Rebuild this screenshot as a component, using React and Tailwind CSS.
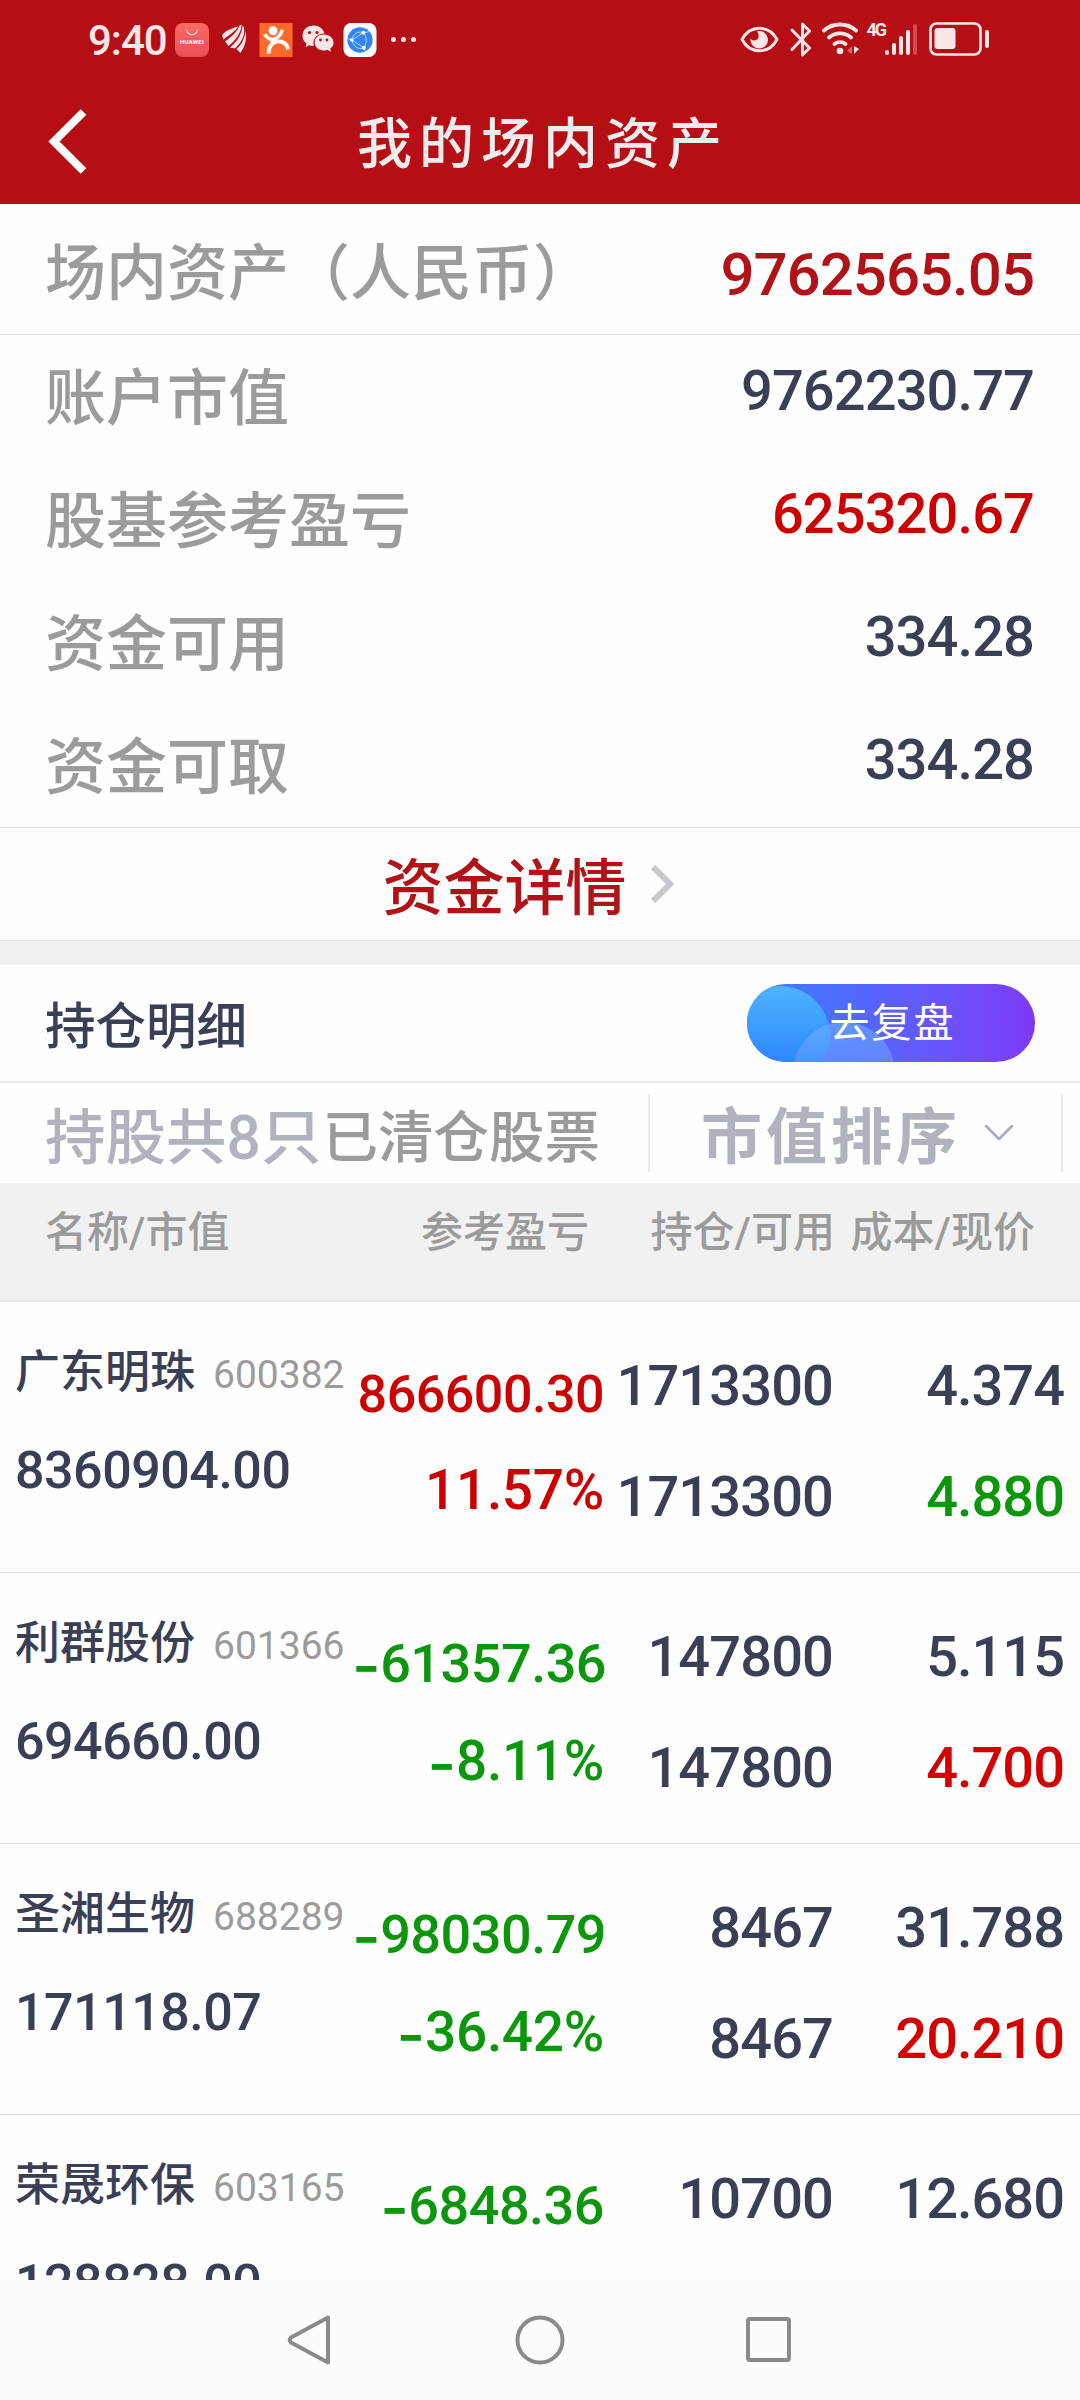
import React from 'react';

const summary = [
  { label: '账户市值', value: '9762230.77', color: 'text-[#3a3f56]' },
  { label: '股基参考盈亏', value: '625320.67', color: 'text-[#cc0000]' },
  { label: '资金可用', value: '334.28', color: 'text-[#3a3f56]' },
  { label: '资金可取', value: '334.28', color: 'text-[#3a3f56]' },
];

const holdings = [
  { name: '广东明珠', code: '600382', marketValue: '8360904.00', profit: '866600.30', rate: '11.57%', amount: '1713300', usable: '1713300', cost: '4.374', price: '4.880', priceUp: false },
  { name: '利群股份', code: '601366', marketValue: '694660.00', profit: '-61357.36', rate: '-8.11%', amount: '147800', usable: '147800', cost: '5.115', price: '4.700', priceUp: true },
  { name: '圣湘生物', code: '688289', marketValue: '171118.07', profit: '-98030.79', rate: '-36.42%', amount: '8467', usable: '8467', cost: '31.788', price: '20.210', priceUp: true },
  { name: '荣晟环保', code: '603165', marketValue: '128828.00', profit: '-6848.36', amount: '10700', cost: '12.680' },
];

const StatusBar = () => (
  <div className="flex h-[80px] items-center justify-between pl-[88px] pr-[90px]">
    <div className="flex items-center text-[#fbe6e7]">
      <span className="w-[87px] text-[42px] font-medium leading-[50px] tracking-[-1px] pt-[2px]">9:40</span>
      {/* huawei store */}
      <div className="mb-[1px] flex h-[34px] w-[34px] flex-col items-center rounded-[8px] bg-gradient-to-b from-[#fb6a5f] to-[#e84f58]">
        <svg className="mt-[6px] h-[7px] w-[12px]" viewBox="0 0 12 7" fill="none" stroke="#ffd5d0" strokeWidth="1.3">
          <path d="M0.8 0.5a5.2 5.2 0 0 0 10.4 0" />
        </svg>
        <span className="mt-[2px] text-[6px] font-bold leading-[8px] tracking-[0.3px] text-white">HUAWEI</span>
      </div>
      {/* feather */}
      <svg className="mb-[2px] ml-[13px] h-[30px] w-[25px]" viewBox="0 0 25 30" fill="currentColor">
        <path d="M0 11C5 5.500 11 4 16 2.500C13 8 8 10 1.500 15.500Z" />
        <path d="M3 17.500C10 12.500 15 8 17.500 1.500L19.500 0.500C19.500 9 13 17 6.500 22Z" />
        <path d="M8 23.500C15 18 19.500 11 20.800 1L22 4C23.500 13 18 19.500 13 24.500Z" />
        <path d="M14.500 25C19 21 22.500 16 23.500 7C25.500 16 22 24 18.500 29Z" />
      </svg>
      {/* dancing man */}
      <svg className="mb-[1px] ml-[12px] h-[34px] w-[34px]" viewBox="0 0 34 35" fill="none">
        <rect width="34" height="35" fill="#ff6a2b" />
        <circle cx="14" cy="8" r="4.6" fill="#fff" />
        <path d="M5.500 11.500C8 16 11 17.500 15 16.500C20 15.500 22 12 23.500 7" stroke="#fff" strokeWidth="3.600" />
        <path d="M14 16L13 22M9.500 31.500C9 25 13 19.500 18 19C24 18.500 28 21 29.500 27" stroke="#fff" strokeWidth="4" />
      </svg>
      {/* wechat */}
      <svg className="mb-[2px] ml-[9px] h-[28px] w-[32px]" viewBox="0 0 32 28" fill="currentColor">
        <path d="M11.500 0.500C5 0.500 0.500 5 0.500 10.500C0.500 14 2 16.500 4.500 18.500L3.500 22L7.500 20.200C9 20.800 10.500 21 11.800 20.800C10 14 15 8.500 22.500 8.500C21.500 4 17 0.500 11.500 0.500Z" />
        <path d="M21.800 9.500C16.500 9.500 12.700 13 12.700 17.500C12.700 22 16.500 25.500 21.800 25.500C23 25.500 24.500 25.300 25.500 24.800L29 26.800L28.200 23.600C30.500 22 31.500 20 31.500 17.500C31.500 13 27 9.500 21.800 9.500Z" />
        <g fill="#b50f15">
          <circle cx="7.500" cy="7.500" r="1.600" />
          <circle cx="15" cy="7.500" r="1.600" />
          <circle cx="18.500" cy="15" r="1.400" />
          <circle cx="25" cy="15" r="1.400" />
        </g>
      </svg>
      {/* browser */}
      <svg className="mb-[1px] ml-[9px] h-[34px] w-[34px]" viewBox="0 0 34 35" fill="none">
        <rect width="34" height="35" rx="8" fill="#fff" />
        <circle cx="17" cy="17.500" r="13" fill="#3186f3" />
        <path d="M20.500 10L8.500 17.500L21 25.500M20.500 10C15 8 10 11 8.500 17.500M21.500 10C24 15 24 21 21 25.500M8.500 17.500C10 24 15 28 21 25.500M20.500 10L26 9M21 25.500L22 29M8.500 17.500L4.500 16" stroke="#b9d8ff" />
        <g fill="#fff">
          <circle cx="20.500" cy="10" r="2" />
          <circle cx="8.500" cy="17.500" r="1.800" />
          <circle cx="21" cy="25.500" r="2" />
        </g>
      </svg>
      <div className="mb-[2px] ml-[14px] flex gap-[5px]">
        <span className="size-[5px] rounded-full bg-current" />
        <span className="size-[5px] rounded-full bg-current" />
        <span className="size-[5px] rounded-full bg-current" />
      </div>
    </div>

    <div className="mb-[2px] flex items-center text-[#fbe6e7]">
      <svg className="h-[27px] w-[39px]" viewBox="0 0 39 27" fill="none">
        <path d="M2 13.500C10 -1.500 29 -1.500 37 13.500C29 28.500 10 28.500 2 13.500Z" stroke="currentColor" strokeWidth="3" strokeLinejoin="round" />
        <path d="M17 5.200A8.800 8.800 0 1 1 10.500 12.500C12 15.500 18 15 18.600 11C18.900 8.500 18 6.500 17 5.200Z" fill="currentColor" />
      </svg>
      <svg className="ml-[11px] h-[35px] w-[22px]" viewBox="0 0 22 35" fill="none" stroke="currentColor" strokeWidth="3" strokeLinecap="round" strokeLinejoin="round">
        <path d="M2 8L19.500 26L12.500 33V2L19.500 9L2 27.500" />
      </svg>
      <svg className="ml-[10px] h-[34px] w-[38px]" viewBox="0 0 38 34" fill="none">
        <g stroke="currentColor" strokeWidth="3.800" strokeLinecap="round">
          <path d="M2 8.500C11 0.500 25 0.500 34 8.500" />
          <path d="M7 15.500C13 10 23 10 29 15.500" />
          <path d="M12.500 22C16 19.500 20.500 19.500 23.500 22" />
        </g>
        <circle cx="18" cy="29" r="3.300" fill="currentColor" />
        <path d="M30 24V32L25 29Z" fill="#d8666b" />
        <path d="M32 24V32L37 27Z" fill="currentColor" />
      </svg>
      <span className="ml-[6px] self-start text-[18px] font-bold leading-[16px] tracking-[-2px]">4G</span>
      <svg className="h-[33px] w-[33px]" viewBox="0 0 33 33" fill="currentColor">
        <rect x="0" y="27" width="4" height="5" rx="2" />
        <rect x="7" y="20" width="4" height="12" rx="2" />
        <rect x="14" y="13" width="4" height="19" rx="2" />
        <rect x="21" y="7" width="4" height="25" rx="2" />
        <rect x="28" y="1" width="4" height="31" rx="2" fill="#d04a50" />
      </svg>
      <svg className="ml-[11px] h-[34px] w-[61px]" viewBox="0 0 61 34" fill="none">
        <rect x="1.500" y="1.500" width="50" height="31" rx="6" stroke="currentColor" strokeWidth="2.600" />
        <rect x="5.500" y="6" width="21" height="21" rx="3" fill="currentColor" />
        <rect x="56" y="8" width="4" height="18" rx="2" fill="currentColor" />
      </svg>
    </div>
  </div>
);

// hyphen is set larger in Inter so it gets the width of a minus sign
const Signed = ({ text }) =>
  text.startsWith('-') ? (
    <>
      <span className="align-[-6px] font-['Inter',sans-serif] text-[62px] leading-[20px]">-</span>
      {text.slice(1)}
    </>
  ) : (
    text
  );

const Holding = ({ item }) => {
  const isLoss = item.profit.startsWith('-');
  const priceColor = item.priceUp ? 'text-[#d40000]' : 'text-[#0b960b]';

  return (
    <div className="grid h-[271px] shrink-0 grid-cols-[337px_252px_229px_231px] border-b border-[#e0e0e0] px-[15px] text-[#3a3f56]">
      <div className="pt-[41px]">
        <div className="flex h-[60px] items-baseline whitespace-nowrap leading-[60px]">
          <span className="text-[45px]">{item.name}</span>
          <span className="ml-[18px] text-[39px] font-[450] text-[#9b9b9b]">{item.code}</span>
        </div>
        <div className="mt-[38px] text-[52px] leading-[60px] tracking-[-0.5px]">{item.marketValue}</div>
      </div>
      <div className={`text-right whitespace-nowrap ${isLoss ? 'pt-[61px] text-[#0b960b]' : 'pt-[63px] text-[#cc0000]'}`}>
        <div className={`leading-[60px] tracking-[-0.5px] ${isLoss ? 'text-[54px]' : 'text-[52px]'}`}>
          <Signed text={item.profit} />
        </div>
        {item.rate && (
          <div className={`text-[55px] leading-[60px] tracking-[-0.3px] ${isLoss ? 'mt-[37px]' : 'mt-[35px]'}`}>
            <Signed text={item.rate} />
          </div>
        )}
      </div>
      <div className="pt-[54px] text-right text-[56px] leading-[60px] tracking-[-0.9px]">
        <div>{item.amount}</div>
        {item.usable && <div className="mt-[51px]">{item.usable}</div>}
      </div>
      <div className="pt-[54px] text-right text-[56px] leading-[60px] tracking-[-1px]">
        <div>{item.cost}</div>
        {item.price && <div className={`mt-[51px] ${priceColor}`}>{item.price}</div>}
      </div>
    </div>
  );
};

const App = () => {
  return (
    <div className="flex h-[2400px] w-[1080px] flex-col overflow-hidden bg-[#fefefe] font-['Roboto','Noto_Sans_CJK_SC',sans-serif] font-[470]">
      <header className="h-[204px] shrink-0 bg-[#b50f15]">
        <StatusBar />
        <div className="grid h-[124px] grid-cols-[200px_1fr_200px] items-center">
          <svg className="mb-[3px] ml-[48px] h-[66px] w-[40px]" viewBox="0 0 40 66" fill="none" stroke="#fff" strokeWidth="8">
            <path d="M35.500 4L6 33.500L35.500 63" />
          </svg>
          <h1 className="pl-[6px] pt-[4px] text-center text-[55px] leading-[70px] tracking-[7px] text-[#ededed]">我的场内资产</h1>
        </div>
      </header>

      {/* total */}
      <section className="flex h-[131px] shrink-0 items-center justify-between border-b border-[#e0e0e0] pl-[45px] pr-[46px]">
        <span className="pt-[10px] text-[61px] leading-[70px] text-[#9b9b9b]">场内资产（人民币）</span>
        <span className="pt-[11px] text-[60px] leading-[70px] tracking-[-1px] text-[#b01218]">9762565.05</span>
      </section>

      {/* account details */}
      <section className="h-[492px] shrink-0">
        {summary.map((row) => (
          <div key={row.label} className="flex h-[123px] items-center justify-between pl-[45px] pr-[46px]">
            <span className="pt-[5px] text-[61px] leading-[70px] text-[#9b9b9b]">{row.label}</span>
            <span className={`pb-[11px] text-[56px] leading-[70px] tracking-[-0.9px] ${row.color}`}>{row.value}</span>
          </div>
        ))}
      </section>

      <section className="flex h-[114px] shrink-0 items-center justify-center border-y border-[#e0e0e0] pr-[22px]">
        <span className="pt-[9px] text-[61px] leading-[70px] text-[#b01218]">资金详情</span>
        <svg className="ml-[23px] h-[40px] w-[26px]" viewBox="0 0 26 40" fill="none" stroke="#c7c7cc" strokeWidth="6">
          <path d="M3 3L20 20L3 37" />
        </svg>
      </section>
      <div className="h-[24px] shrink-0 bg-[#f1f1f1]" />

      {/* holdings title */}
      <section className="flex h-[118px] shrink-0 items-center justify-between border-b-[2px] border-[#e6eaea] pl-[45px] pr-[45px]">
        <h2 className="pt-[8px] text-[50.500px] leading-[60px] text-[#3a3f56]">持仓明细</h2>
        <button className="relative h-[78px] w-[288px] overflow-hidden rounded-full bg-gradient-to-r from-[#2f80ff] via-[#5a60fb] to-[#7d38f8]">
          <span className="absolute -left-[17px] top-[2px] size-[100px] rounded-full bg-gradient-to-b from-[#4cb4ff] to-[#2b76ff]" />
          <span className="absolute left-[46px] top-[38px] size-[102px] rounded-full bg-gradient-to-b from-[#6fb0ff]/60 to-[#5a78ff]/40" />
          <span className="relative pl-[3px] text-[40px] font-normal leading-[80px] tracking-[2px] text-white">去复盘</span>
        </button>
      </section>

      {/* filter row */}
      <section className="flex h-[100px] shrink-0 items-center">
        <div className="flex h-[78px] w-[650px] items-center whitespace-nowrap border-r-[2px] border-[#e6eaea] pl-[45px] pt-[11px] leading-[78px]">
          <span className="text-[60.500px] text-[#b0b2be]">持股共8只</span>
          <span className="pl-[1px] text-[55.500px] text-[#9b9b9b]">已清仓股票</span>
        </div>
        <div className="flex h-[78px] w-[413px] items-center border-r-[2px] border-[#e6eaea] pl-[51px]">
          <span className="pt-[9px] text-[61px] font-bold leading-[78px] tracking-[4px] text-[#b0b2be]">市值排序</span>
          <svg className="ml-[23px] h-[18px] w-[30px]" viewBox="0 0 30 18" fill="none" stroke="#a3acc0" strokeWidth="2.500" strokeLinecap="round" strokeLinejoin="round">
            <path d="M2 2L15 15L28 2" />
          </svg>
        </div>
      </section>

      {/* table head */}
      <div className="grid h-[119px] shrink-0 grid-cols-[300px_289px_246px_200px] border-b-[2px] border-[#e6e6e6] bg-[#f1f1f1] pt-[20px] text-right text-[42px] leading-[60px] text-[#9b9b9b]">
        <span className="pl-[45px] text-left">名称/市值</span>
        <span>参考盈亏</span>
        <span>持仓/可用</span>
        <span>成本/现价</span>
      </div>

      <main className="flex min-h-0 flex-1 flex-col overflow-hidden">
        {holdings.map((item) => (
          <Holding key={item.code} item={item} />
        ))}
      </main>

      {/* system navigation */}
      <nav className="flex h-[120px] shrink-0 items-center bg-[#fcfcfc] pl-[286px] text-[#8a8a8a]">
        <svg className="h-[52px] w-[46px]" viewBox="0 0 46 52" fill="none" stroke="currentColor" strokeWidth="4" strokeLinejoin="round">
          <path d="M42 3.500V48.500L5 28.500Q2.500 26 5 23.500Z" />
        </svg>
        <svg className="ml-[182px] size-[52px]" viewBox="0 0 52 52" fill="none" stroke="currentColor" strokeWidth="4">
          <circle cx="26" cy="26" r="22.500" />
        </svg>
        <svg className="ml-[177px] size-[52px]" viewBox="0 0 52 52" fill="none" stroke="currentColor" strokeWidth="4">
          <rect x="5" y="5" width="41" height="41" rx="2" />
        </svg>
      </nav>
    </div>
  );
};

export default App;
